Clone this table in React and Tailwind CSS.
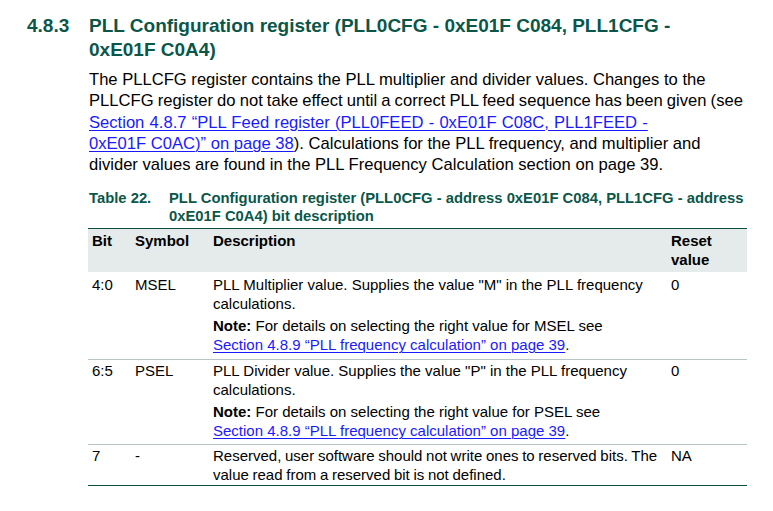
import React from "react";

const A = ({ children }) => (
  <span className="text-[#1a1aff] underline decoration-1 underline-offset-[2px]">{children}</span>
);

function Row({ bit, sym, children, reset, pb, last }) {
  return (
    <div className={`flex border-b ${last ? "border-[#0b4f43]" : "border-[#b9c5c4]"} ${pb} pt-[2px]`}>
      <div className="w-[43px] pl-[4px]">{bit}</div>
      <div className="w-[78px] pl-[4px]">{sym}</div>
      <div className="w-[458px] pl-[4px]">{children}</div>
      <div className="w-[80px] pl-[4px]">{reset}</div>
    </div>
  );
}

export default function App() {
  return (
    <div className="w-[773px] h-[511px] bg-white text-black overflow-hidden" style={{ fontFamily: '"Liberation Sans", Arial, sans-serif' }}>
      <div className="flex pt-[14px] text-[19px] leading-[24px] font-bold text-[#0a574a]">
        <div className="w-[89px] pl-[27px]">4.8.3</div>
        <div>
          PLL Configuration register (PLL0CFG - 0xE01F C084, PLL1CFG -<br />0xE01F C0A4)
        </div>
      </div>
      <div className="pl-[89px] pt-[7px] text-[16.6px] leading-[21.3px]">
        The PLLCFG register contains the PLL multiplier and divider values. Changes to the<br />
        <span className="[word-spacing:-0.5px]">PLLCFG register do not take effect until a correct PLL feed sequence has been given (see</span><br />
        <span className="[word-spacing:0.6px]"><A>Section 4.8.7 “PLL Feed register (PLL0FEED - 0xE01F C08C, PLL1FEED -</A></span><br />
        <A>0xE01F C0AC)” on page 38</A>). Calculations for the PLL frequency, and multiplier and<br />
        divider values are found in the PLL Frequency Calculation section on page 39.
      </div>
      <div className="flex pl-[89px] pt-[14px] text-[14.8px] leading-[18px] font-bold text-[#0a574a]">
        <div className="w-[80px]">Table 22.</div>
        <div>
          PLL Configuration register (PLL0CFG - address 0xE01F C084, PLL1CFG - address<br />
          0xE01F C0A4) bit description
        </div>
      </div>
      <div className="ml-[88px] mt-[3px] w-[659px] text-[15px] leading-[18.5px] border-t border-[#0b4f43]">
        <div className="flex bg-[#e5eaea] pt-[3px] pb-[3px] font-bold">
          <div className="w-[43px] pl-[4px]">Bit</div>
          <div className="w-[78px] pl-[4px]">Symbol</div>
          <div className="w-[458px] pl-[4px]">Description</div>
          <div className="w-[80px] pl-[4px]">Reset<br />value</div>
        </div>
        <div className="pt-[2px]">
          <Row bit="4:0" sym="MSEL" reset="0" pb="pb-[5px]">
            <div>PLL Multiplier value. Supplies the value "M" in the PLL frequency<br />calculations.</div>
            <div className="mt-[4px]"><b>Note:</b> For details on selecting the right value for MSEL see<br /><A>Section 4.8.9 “PLL frequency calculation” on page 39</A>.</div>
          </Row>
        </div>
        <Row bit="6:5" sym="PSEL" reset="0" pb="pb-[4px]">
          <div>PLL Divider value. Supplies the value "P" in the PLL frequency<br />calculations.</div>
          <div className="mt-[4px]"><b>Note:</b> For details on selecting the right value for PSEL see<br /><A>Section 4.8.9 “PLL frequency calculation” on page 39</A>.</div>
        </Row>
        <Row bit="7" sym="-" reset="NA" pb="pb-[1px]" last>
          <div className="[word-spacing:-0.5px]">Reserved, user software should not write ones to reserved bits. The<br />value read from a reserved bit is not defined.</div>
        </Row>
      </div>
    </div>
  );
}
